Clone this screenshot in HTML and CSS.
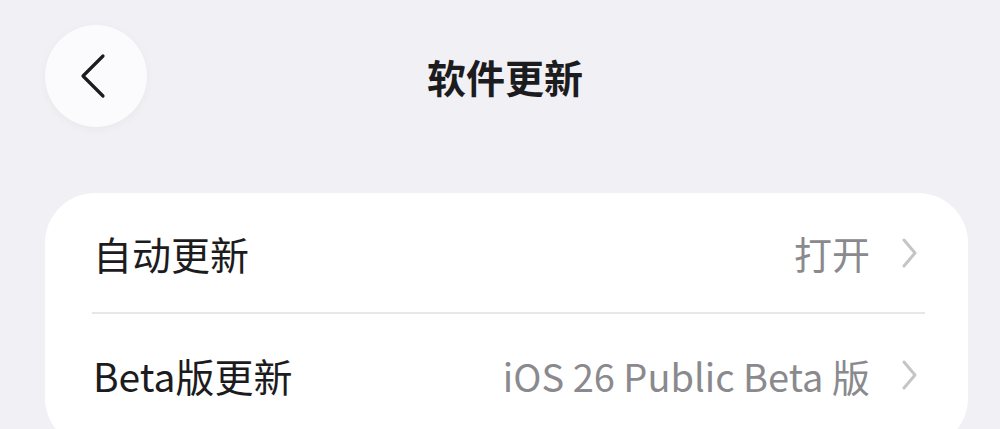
FILE: index.html
```html
<!DOCTYPE html>
<html lang="zh-CN">
  <head>
    <meta charset="UTF-8" />
    <meta name="viewport" content="width=device-width, initial-scale=1.0" />
    <title>软件更新</title>
    <link rel="stylesheet" href="styles.css">
  </head>
  <body>
    <header class="nav-bar">
      <button class="back-button" aria-label="返回">
        <svg width="30" height="46" viewBox="0 0 30 46" aria-hidden="true">
          <path d="M25 3 L5 23 L25 43" fill="none" stroke="#1c1c1e" stroke-width="3.2" stroke-linecap="round" stroke-linejoin="round" />
        </svg>
      </button>
      <h1 class="nav-title">软件更新</h1>
      <span class="nav-spacer"></span>
    </header>

    <section class="settings-group">
      <a class="settings-row" href="#">
        <span class="row-label">自动更新</span>
        <span class="row-value">打开</span>
        <svg class="row-chevron" width="20" height="32" viewBox="0 0 20 32" aria-hidden="true">
          <path d="M6 3 L17 16 L6 29" fill="none" stroke="#c5c5c9" stroke-width="3" stroke-linecap="round" stroke-linejoin="round" />
        </svg>
      </a>
      <a class="settings-row" href="#">
        <span class="row-label">Beta版更新</span>
        <span class="row-value">iOS 26 Public Beta 版</span>
        <svg class="row-chevron" width="20" height="32" viewBox="0 0 20 32" aria-hidden="true">
          <path d="M6 3 L17 16 L6 29" fill="none" stroke="#c5c5c9" stroke-width="3" stroke-linecap="round" stroke-linejoin="round" />
        </svg>
      </a>
    </section>
  </body>
</html>
```

FILE: styles.css
```css
body {
  margin: 0;
  background-color: #f1f0f5;
  font-family: "Noto Sans CJK SC", "Noto Sans", sans-serif;
  color: #1c1c1e;
  overflow: hidden;
}

/* Top navigation */
.nav-bar {
  display: flex;
  align-items: center;
  justify-content: space-between;
  padding: 25px 45px 0 45px;
  height: 102px;
}

.back-button {
  width: 102px;
  height: 102px;
  border-radius: 50%;
  border: none;
  background-color: #fbfbfd;
  box-shadow: 0 2px 10px rgba(0, 0, 0, 0.04);
  display: flex;
  align-items: center;
  justify-content: center;
  padding: 0 6px 0 0;
  cursor: pointer;
}

.nav-title {
  margin: 0;
  font-size: 39px;
  font-weight: 700;
  padding-left: 10px;
}

.nav-spacer {
  width: 102px;
}

/* Grouped list */
.settings-group {
  margin: 66px 32px 0 45px;
  background-color: #ffffff;
  border-radius: 50px;
  padding: 0 43px 12px 47px;
}

.settings-row {
  display: flex;
  align-items: center;
  height: 119px;
  text-decoration: none;
  color: inherit;
}

.settings-row + .settings-row {
  border-top: 2px solid #e7e7eb;
  height: 122px;
}

.row-label {
  font-size: 39px;
  flex-grow: 1;
  padding-left: 1px;
}

.row-value {
  font-size: 38px;
  color: #8a8a8e;
  margin-right: 28px;
}

.row-chevron {
  flex-shrink: 0;
  margin-right: 7px;
}
```
